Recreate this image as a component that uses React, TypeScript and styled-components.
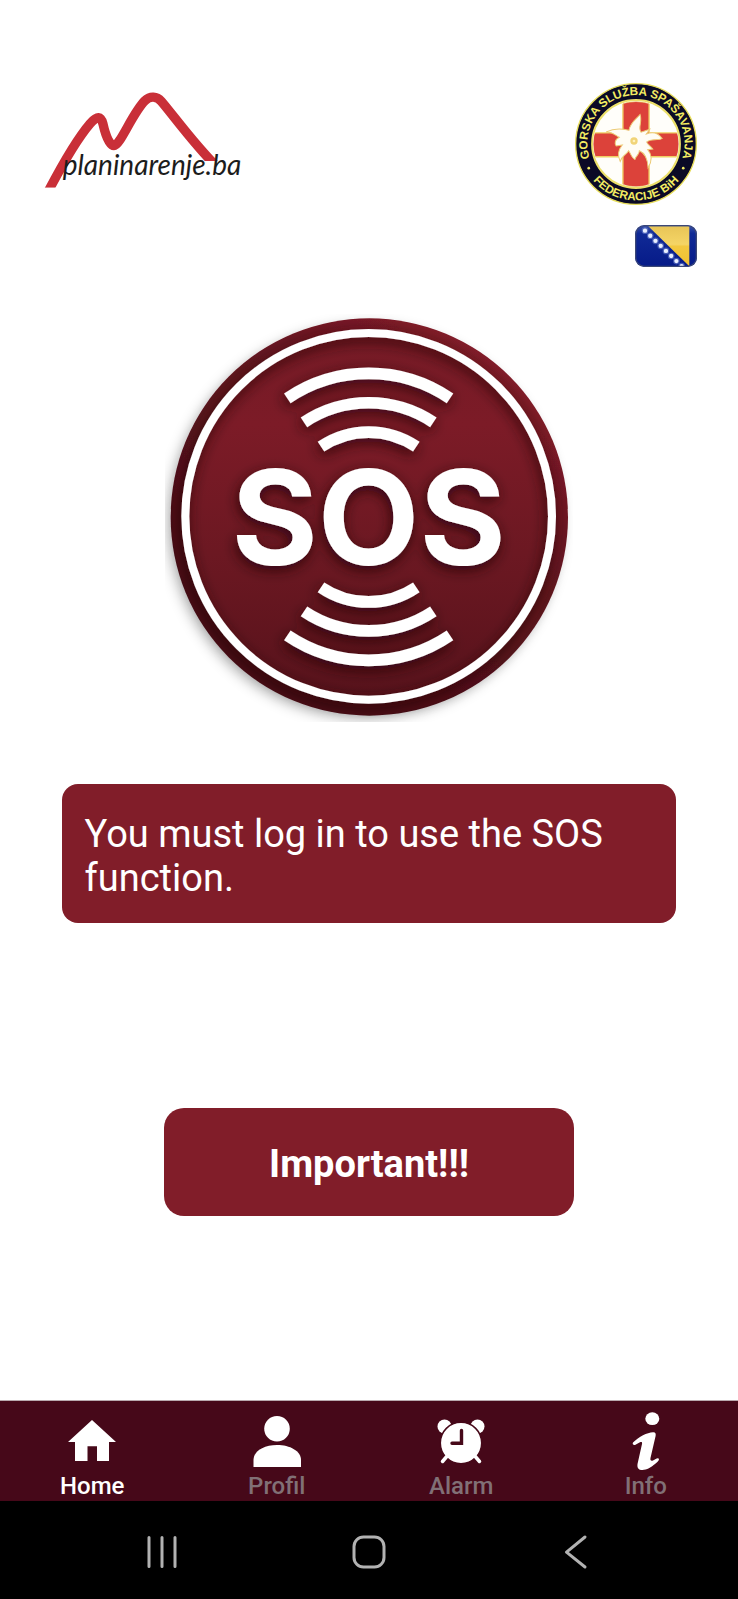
import { useState } from 'react';
import styled, { createGlobalStyle } from 'styled-components';

export default function App() {
	const [activeTab, setActiveTab] = useState<string>('Home');

	return (
		<StyledPage>
			<GlobalStyle />
			<StyledHeader>
				<StyledLogoRow>
					<PlaninarenjeLogo />
					<RescueBadge />
				</StyledLogoRow>
				<StyledPlainButton type="button" aria-label="Bosanski">
					<FlagIcon />
				</StyledPlainButton>
			</StyledHeader>
			<StyledMain>
				<StyledSosButton type="button" aria-label="SOS">
					<SosIcon />
				</StyledSosButton>
				<StyledMessage>You must log in to use the SOS function.</StyledMessage>
				<StyledImportantButton type="button">Important!!!</StyledImportantButton>
			</StyledMain>
			<StyledTabBar>
				{tabs.map(({ label, icon }) => (
					<StyledTab
						key={label}
						type="button"
						$active={label === activeTab}
						onClick={() => setActiveTab(label)}
					>
						<StyledTabIcon viewBox="0 0 60 60">{icon}</StyledTabIcon>
						{label}
					</StyledTab>
				))}
			</StyledTabBar>
			<StyledSystemBar>
				<StyledSystemButton type="button" aria-label="Recent apps">
					<StyledSystemIcon viewBox="0 0 40 40">
						<path d="M7 5.500V34.500M20 5.500V34.500M33 5.500V34.500" />
					</StyledSystemIcon>
				</StyledSystemButton>
				<StyledSystemButton type="button" aria-label="Home screen">
					<StyledSystemIcon viewBox="0 0 40 40">
						<rect x="5" y="5" width="30" height="30" rx="9.500" />
					</StyledSystemIcon>
				</StyledSystemButton>
				<StyledSystemButton type="button" aria-label="Back">
					<StyledSystemIcon viewBox="0 0 40 40">
						<path d="M29 5L10.500 20.200L29 35" />
					</StyledSystemIcon>
				</StyledSystemButton>
			</StyledSystemBar>
		</StyledPage>
	);
}

const PlaninarenjeLogo = () => (
	<svg width="203" height="106" viewBox="33 33 609 318">
		<clipPath id="mountain">
			<path d="M33 33H642V243H400V323H33Z" />
		</clipPath>
		<path
			clipPath="url(#mountain)"
			d="M49 345C92 262 140 178 180 131C202 106 213 108 219 132C228 172 240 197 252 197C270 197 308 98 345 62C360 47 380 48 394 64C430 106 490 190 562 262"
			fill="none"
			stroke="#c92f38"
			strokeWidth="28"
		/>
		<StyledLogoText x="98" y="286">
			planinarenje.ba
		</StyledLogoText>
	</svg>
);

const RescueBadge = () => (
	<svg width="122" height="122" viewBox="45 38 364 364">
		<defs>
			<path id="badgeTop" d="M96 281A145 145 0 1 1 358 281" />
			<path id="badgeBottom" d="M77 296A168 168 0 0 0 377 296" />
			<clipPath id="badgeInner">
				<circle cx="227" cy="220" r="127" />
			</clipPath>
		</defs>
		<circle cx="227" cy="220" r="180" fill="#0b0a26" stroke="#e6dc58" strokeWidth="4" />
		<circle cx="227" cy="220" r="131" fill="#fffefa" stroke="#ece06a" strokeWidth="6" />
		<g clipPath="url(#badgeInner)" fill="#dc423a" stroke="#f0ce62" strokeWidth="4">
			<path d="M188 98Q227 88 266 98V187H354Q364 222 354 258H266V343Q227 353 188 343V258H100Q90 222 100 187H188Z" />
		</g>
		<path
			d="M239 132C229 145 210 156 206 179C186 174 158 174 138 184C158 184 164 193 177 200C164 207 162 218 168 226L186 223C176 235 170 252 180 272C185 253 197 254 205 240C211 248 214 262 224 266C227 254 236 254 237 240C252 246 262 266 263 291C276 270 274 251 262 237L277 235C270 224 261 222 259 214C272 202 288 211 305 204C292 184 274 184 258 190L268 176L242 185C232 171 247 152 239 132Z"
			fill="#fffdf5"
			stroke="#eccb76"
			strokeWidth="3"
		/>
		<circle cx="221" cy="211" r="11" fill="#f1d477" />
		<circle cx="221" cy="211" r="4" fill="#fff2bd" />
		<StyledBadgeText>
			<textPath href="#badgeTop" startOffset="50%">
				GORSKA SLUŽBA SPAŠAVANJA
			</textPath>
		</StyledBadgeText>
		<StyledBadgeText>
			<textPath href="#badgeBottom" startOffset="50%">
				FEDERACIJE BiH
			</textPath>
		</StyledBadgeText>
		<circle cx="86" cy="292" r="4" fill="#f3ec62" />
		<circle cx="368" cy="292" r="4" fill="#f3ec62" />
	</svg>
);

const FlagIcon = () => (
	<svg width="62" height="42" viewBox="0 0 186 126">
		<defs>
			<clipPath id="flagShape">
				<rect width="186" height="126" rx="28" />
			</clipPath>
			<linearGradient id="flagBlue" x2="0" y2="1">
				<stop offset="0" stopColor="#3d55a8" />
				<stop offset="0.2" stopColor="#102a96" />
				<stop offset="1" stopColor="#061a88" />
			</linearGradient>
			<linearGradient id="flagYellow" x2="0" y2="1">
				<stop offset="0" stopColor="#e8c557" />
				<stop offset="0.45" stopColor="#f5d566" />
				<stop offset="0.5" stopColor="#f3c840" />
				<stop offset="1" stopColor="#f0c130" />
			</linearGradient>
		</defs>
		<g clipPath="url(#flagShape)">
			<rect width="186" height="126" fill="url(#flagBlue)" />
			<path d="M40 4H163V124Z" fill="url(#flagYellow)" />
			{flagStars.map((step) => (
				<g key={step}>
					<circle cx={30 + step * 15.700} cy={17 + step * 15.200} r="10" fill="#7f93dc" fillOpacity="0.5" />
					<circle cx={30 + step * 15.700} cy={17 + step * 15.200} r="6.500" fill="#eaf0ff" />
				</g>
			))}
			<rect x="2" y="2" width="182" height="122" rx="26" fill="none" stroke="#3b4776" strokeWidth="4" />
		</g>
	</svg>
);

const SosIcon = () => (
	<StyledSosSvg viewBox="45 42 1224 1224">
		<defs>
			<linearGradient id="sosRim" x1="0.8" y1="0.1" x2="0.25" y2="0.85">
				<stop offset="0" stopColor="#821b29" />
				<stop offset="0.35" stopColor="#651620" />
				<stop offset="1" stopColor="#460d16" />
			</linearGradient>
			<linearGradient id="sosFace" x2="0" y2="1">
				<stop offset="0" stopColor="#751a25" />
				<stop offset="0.25" stopColor="#7c1b27" />
				<stop offset="0.6" stopColor="#6c1822" />
				<stop offset="1" stopColor="#57121b" />
			</linearGradient>
			<filter id="sosShadow" x="-20%" y="-20%" width="140%" height="140%">
				<feDropShadow dx="-14" dy="14" stdDeviation="18" floodColor="#000" floodOpacity="0.22" />
			</filter>
			<filter id="signShadow" x="-20%" y="-20%" width="140%" height="140%">
				<feDropShadow dx="-4" dy="12" stdDeviation="20" floodColor="#26040a" floodOpacity="0.85" />
			</filter>
		</defs>
		<circle cx="658" cy="651" r="596" fill="url(#sosRim)" filter="url(#sosShadow)" />
		<circle cx="656" cy="649" r="550" fill="url(#sosFace)" />
		<g filter="url(#signShadow)" fill="none" stroke="#fff">
			<circle cx="656" cy="649" r="550" strokeWidth="24" />
			<g strokeWidth="35">
				<path d="M412 295A435 435 0 0 1 900 295" />
				<path d="M462 367A350 350 0 0 1 850 367" />
				<path d="M513 440A255 255 0 0 1 799 440" />
				<path d="M513 862A255 255 0 0 0 799 862" />
				<path d="M462 934A350 350 0 0 0 850 934" />
				<path d="M412 1006A435 435 0 0 0 900 1006" />
			</g>
			<StyledSosText x="656" y="795">
				SOS
			</StyledSosText>
		</g>
	</StyledSosSvg>
);

const flagStars = [0, 1, 2, 3, 4, 5, 6, 7];

const tabs: TabProps[] = [
	{
		label: 'Home',
		icon: <path d="M30 9L54 31H47V50H35V35.300H25.500V50H13V31H6Z" />,
	},
	{
		label: 'Profil',
		icon: (
			<>
				<circle cx="30" cy="17.700" r="12.800" />
				<path d="M6.500 56V49C6.500 40 17 34 30 34S54 40 54 49V56Z" />
			</>
		),
	},
	{
		label: 'Alarm',
		icon: (
			<>
				<circle cx="13.500" cy="15.500" r="7" />
				<circle cx="46.500" cy="15.500" r="7" />
				<circle cx="30" cy="32" r="20.700" stroke="#460819" strokeWidth="1.500" />
				<path d="M17 44L11.500 50.500M43 44L48.500 50.500" stroke="#fff" strokeWidth="3.500" strokeLinecap="round" />
				<path d="M30.500 19.500V32.200H21" fill="none" stroke="#460819" strokeWidth="3.400" strokeLinecap="round" />
			</>
		),
	},
	{
		label: 'Info',
		icon: (
			<>
				<ellipse cx="36.300" cy="7.700" rx="7" ry="6.400" />
				<path d="M17 31.500C23 25.500 31 21.500 37 21.200C39.500 21 40 22.500 39.600 25L34.500 47C34 49.500 35 50 37 49.500C39.500 48.500 41 46.700 42.500 47.500C44 49 41.500 51 39 53C35.500 56 30.500 59 26.500 59C22.500 59 21 57 21.500 53L26 33C26.500 31 25.500 30.500 23.500 31.500L19 34C17.500 34.500 16 33 17 31.500Z" />
			</>
		),
	},
];

const GlobalStyle = createGlobalStyle`
	* {
		box-sizing: border-box;
	}

	body {
		margin: 0;
		background-color: #fff;
		font-family: Roboto, sans-serif;
	}

	button {
		border: none;
		padding: 0;
		font-family: inherit;
		cursor: pointer;
	}

	svg {
		display: block;
	}
`;

const StyledPage = styled.div`
	display: flex;
	flex-direction: column;
	min-height: 100vh;
`;

const StyledHeader = styled.header`
	display: flex;
	flex-direction: column;
	align-items: flex-end;
	gap: 20px;
	padding: 83px 41px 0;
`;

const StyledLogoRow = styled.div`
	display: flex;
	align-items: center;
	justify-content: space-between;
	align-self: stretch;
`;

const StyledLogoText = styled.text`
	font-family: Lato, sans-serif;
	font-size: 84px;
	font-style: italic;
	fill: #1c1c1c;
`;

const StyledBadgeText = styled.text`
	font-family: 'Liberation Sans', Arial, sans-serif;
	font-size: 35px;
	font-weight: 700;
	text-anchor: middle;
	fill: #f3ec62;
`;

const StyledPlainButton = styled.button`
	background: none;
`;

const StyledMain = styled.main`
	display: flex;
	flex: 1;
	flex-direction: column;
	align-items: center;
	padding: 47px 0;
`;

const StyledSosButton = styled(StyledPlainButton)`
	width: 100%;
	max-width: 408px;
`;

const StyledSosSvg = styled.svg`
	width: 100%;
`;

const StyledSosText = styled.text`
	font-family: Inter, sans-serif;
	font-size: 396px;
	font-weight: 700;
	text-anchor: middle;
	fill: #fff;
	stroke: none;
`;

const StyledMessage = styled.p`
	width: 83.33%;
	margin: 62px 0 0;
	padding: 28px 23px 23px;
	border-radius: 16px;
	background-color: #811d29;
	color: #fff;
	font-size: 38px;
	line-height: 44px;
`;

const StyledImportantButton = styled.button`
	width: 55.55%;
	margin-top: 185px;
	padding: 34px 20px 30px;
	border-radius: 20px;
	background-color: #811d29;
	color: #fff;
	font-size: 38px;
	font-weight: 700;
	line-height: 44px;
`;

const StyledTabBar = styled.nav`
	display: flex;
	padding-top: 10px;
	border-top: 1px solid #b9a9ae;
	background-color: #460819;
`;

const StyledTab = styled.button<{ $active: boolean }>`
	display: flex;
	flex: 1;
	flex-direction: column;
	align-items: center;
	background: none;
	color: ${({ $active }) => ($active ? '#fff' : '#817076')};
	font-size: 24px;
	font-weight: 500;
	line-height: 30px;
`;

const StyledTabIcon = styled.svg`
	width: 60px;
	height: 60px;
	fill: #fff;
`;

const StyledSystemBar = styled.div`
	display: flex;
	padding: 31px 8% 27px;
	background-color: #000;
`;

const StyledSystemButton = styled.button`
	display: flex;
	flex: 1;
	justify-content: center;
	background: none;
`;

const StyledSystemIcon = styled.svg`
	width: 40px;
	height: 40px;
	fill: none;
	stroke: #b2b2b2;
	stroke-width: 3;
	stroke-linecap: round;
	stroke-linejoin: round;
`;

type TabProps = {
	label: string;
	icon: React.ReactNode;
};
